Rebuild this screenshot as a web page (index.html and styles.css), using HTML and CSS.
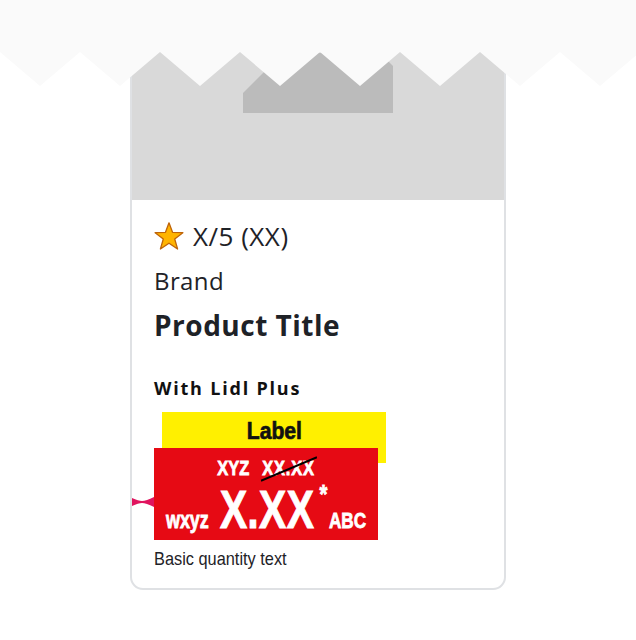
FILE: index.html
```html
<!DOCTYPE html>
<html lang="en">
<head>
<meta charset="utf-8">
<title>Product tile</title>
<link rel="stylesheet" href="styles.css">
</head>
<body>
<div class="page">
  <svg class="zigzag" width="636" height="90" viewBox="0 0 636 90" aria-hidden="true">
    <polygon points="0,0 636,0 636,55.4 600,86 560,52 520,86 480,52 440,86 400,52 360,86 320,52 280,86 240,52 200,86 160,52 120,86 80,52 40,86 0,52" fill="#fafafa"/>
  </svg>
  <article class="card">
    <div class="card-image">
      <svg class="img-shape" width="372" height="150" viewBox="0 0 372 150" aria-hidden="true">
        <polygon points="111,63 111,43 151,3 248,3 261,16 261,63" fill="#bbbbbb"/>
      </svg>
    </div>
    <div class="card-body">
      <div class="rating">
        <svg class="star" width="30" height="28" viewBox="0 0 30 28" aria-hidden="true">
          <polygon points="15,0.8 18.53,10.35 28.88,10.69 20.71,17.05 23.58,27.01 15,21.2 6.42,27.01 9.29,17.05 1.12,10.69 11.47,10.35" fill="#ffb400" stroke="#bf650a" stroke-width="1.3" stroke-linejoin="round"/>
        </svg>
        <span class="rating-text">X/5 (XX)</span>
      </div>
      <div class="brand">Brand</div>
      <h2 class="title">Product Title</h2>
      <div class="plus">With Lidl Plus</div>
      <div class="price">
        <div class="label"><span class="label-text">Label</span></div>
        <div class="pricebox">
          <svg class="marker" width="24" height="10" viewBox="0 0 24 10" aria-hidden="true">
            <path d="M0 0 Q8 4 12 4 Q16 4 24 0 V10 Q16 6 12 6 Q8 6 0 10Z" fill="#e0145e"/>
          </svg>
          <div class="old"><span class="old-unit">XYZ</span><span class="strike">XX.XX</span></div>
          <div class="now"><span class="unit">wxyz</span><span class="big">X.XX</span><span class="star-note">*</span><span class="cur">ABC</span></div>
        </div>
      </div>
      <div class="qty"><span class="qty-text">Basic quantity text</span></div>
    </div>
  </article>
</div>
</body>
</html>
```
FILE: styles.css
```css
html, body {
  margin: 0;
  padding: 0;
  background: #ffffff;
}

.page {
  position: relative;
  width: 636px;
  height: 640px;
  overflow: hidden;
  font-family: "Open Sans", "DejaVu Sans", sans-serif;
  color: #1e2227;
}

.zigzag {
  position: absolute;
  top: 0;
  left: 0;
  z-index: 2;
  display: block;
}

.card {
  box-sizing: border-box;
  width: 376px;
  margin: 48px 0 0 130px;
  border: 2px solid #dfe1e4;
  border-radius: 13px;
  background: #ffffff;
  overflow: hidden;
}

.card-image {
  height: 150px;
  background: #d9d9d9;
}

.img-shape {
  display: block;
}

.card-body {
  padding: 20px 22px 18px;
  display: flex;
  flex-direction: column;
}

.rating {
  display: flex;
  align-items: center;
  gap: 9px;
  height: 32px;
}

.star {
  display: block;
  flex: none;
}

.rating-text {
  font-size: 26px;
  line-height: 32px;
  letter-spacing: 0.5px;
}

.brand {
  margin-top: 14px;
  font-size: 24px;
  line-height: 30px;
  letter-spacing: 0.4px;
}

.title {
  margin: 11px 0 0;
  font-size: 28px;
  line-height: 36px;
  font-weight: 700;
  letter-spacing: 0.5px;
}

.plus {
  margin-top: 33px;
  font-size: 18px;
  line-height: 24px;
  font-weight: 700;
  letter-spacing: 1.8px;
  color: #111111;
}

.price {
  margin-top: 12px;
  display: flex;
  flex-direction: column;
  font-family: "Liberation Sans", Arial, sans-serif;
  font-weight: 700;
}

.label {
  box-sizing: border-box;
  width: 224px;
  height: 51px;
  margin-left: 8px;
  background: #fff000;
  color: #111111;
  text-align: center;
  font-size: 24px;
  line-height: 34px;
  padding-top: 2px;
}

.label-text {
  display: inline-block;
  transform: scaleX(0.88);
  -webkit-text-stroke: 0.7px #111111;
}

.pricebox {
  position: relative;
  box-sizing: border-box;
  width: 224px;
  height: 92px;
  margin-top: -15px;
  background: #e60a14;
  color: #ffffff;
  text-align: center;
  -webkit-text-stroke: 0.8px #ffffff;
}

.marker {
  position: absolute;
  left: -24px;
  top: 49px;
  display: block;
}

.old {
  display: flex;
  justify-content: center;
  gap: 16px;
  font-size: 20px;
  line-height: 24px;
  padding-top: 8px;
  white-space: nowrap;
  transform: scaleX(0.82);
}

.strike {
  position: relative;
  letter-spacing: 1px;
}

.strike::after {
  content: "";
  position: absolute;
  left: -3px;
  right: -5px;
  top: 50%;
  height: 2px;
  background: #000000;
  -webkit-text-stroke: 0;
  transform: rotate(-19deg);
}

.now {
  display: flex;
  justify-content: center;
  align-items: baseline;
  line-height: 52px;
  padding-top: 4px;
  white-space: nowrap;
  transform: scaleX(0.78);
}

.unit {
  font-size: 23px;
  margin-right: 14px;
}

.big {
  font-size: 53px;
}

.star-note {
  font-size: 26px;
  align-self: flex-start;
  line-height: 20px;
  margin: 0 2px 0 7px;
}

.cur {
  font-size: 22px;
}

.qty {
  margin-top: 8px;
  font-family: "Liberation Sans", Arial, sans-serif;
  font-size: 19px;
  line-height: 22px;
  color: #1e2227;
  white-space: nowrap;
}

.qty-text {
  display: inline-block;
  transform: scaleX(0.86);
  transform-origin: left center;
}
```
